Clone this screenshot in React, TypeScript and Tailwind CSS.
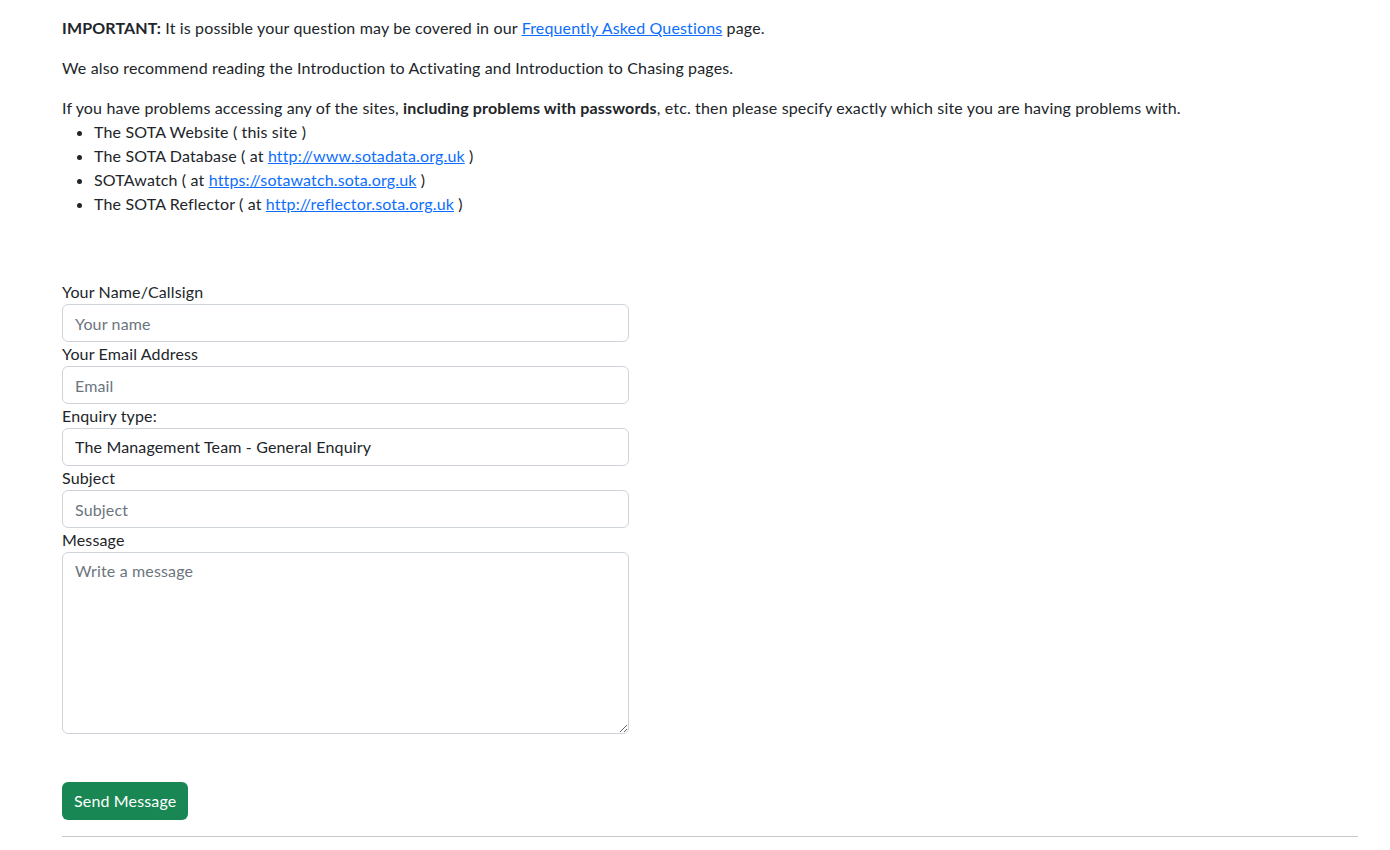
const fieldClass =
  "block w-[567px] h-[38px] rounded-[6px] border border-[#ced4da] bg-white px-3 py-1.5 text-base leading-6 text-[#212529] placeholder:text-[#6c757d] outline-none";

const sites = [
  { name: "The SOTA Website", note: "this site" },
  { name: "The SOTA Database", href: "http://www.sotadata.org.uk" },
  { name: "SOTAwatch", href: "https://sotawatch.sota.org.uk" },
  { name: "The SOTA Reflector", href: "http://reflector.sota.org.uk" },
];

const Label = ({ children }: { children: React.ReactNode }) => (
  <label className="block text-base leading-6">{children}</label>
);

export default function App() {
  return (
    <div className="min-h-[850px] bg-white font-['Lato','Liberation_Sans',sans-serif] text-base leading-6 tracking-[0.15px] text-[#212529]">
      <div className="ml-[62px] w-[1296px] pt-4">
        <p className="mb-4">
          <strong>IMPORTANT:</strong> It is possible your question may be covered in our{" "}
          <a href="#" className="text-[#0d6efd] underline">
            Frequently Asked Questions
          </a>{" "}
          page.
        </p>
        <p className="mb-4">
          We also recommend reading the Introduction to Activating and Introduction to Chasing pages.
        </p>
        <p>
          If you have problems accessing any of the sites, <strong>including problems with passwords</strong>, etc.
          then please specify exactly which site you are having problems with.
        </p>
        <ul className="mb-4 list-disc pl-8">
          {sites.map((s) => (
            <li key={s.name}>
              {s.name} ({" "}
              {s.href ? (
                <>
                  at{" "}
                  <a href="#" className="text-[#0d6efd] underline">
                    {s.href}
                  </a>
                </>
              ) : (
                s.note
              )}{" "}
              )
            </li>
          ))}
        </ul>

        <form className="mt-16">
          <Label>Your Name/Callsign</Label>
          <input className={fieldClass} placeholder="Your name" />
          <Label>Your Email Address</Label>
          <input className={fieldClass} placeholder="Email" />
          <Label>Enquiry type:</Label>
          <select className={`${fieldClass} appearance-none`} defaultValue="general">
            <option value="general">The Management Team - General Enquiry</option>
          </select>
          <Label>Subject</Label>
          <input className={fieldClass} placeholder="Subject" />
          <Label>Message</Label>
          <textarea
            className="block h-[182px] w-[567px] rounded-[6px] border border-[#ced4da] bg-white px-3 py-1.5 text-base leading-6 text-[#212529] placeholder:text-[#6c757d] outline-none"
            placeholder="Write a message"
          />
          <button
            type="button"
            className="mt-12 h-[38px] rounded-[6px] bg-[#198754] px-3 text-base leading-6 text-white"
          >
            Send Message
          </button>
        </form>
        <hr className="mt-4 border-t border-[#c8c9ca]" />
      </div>
    </div>
  );
}
